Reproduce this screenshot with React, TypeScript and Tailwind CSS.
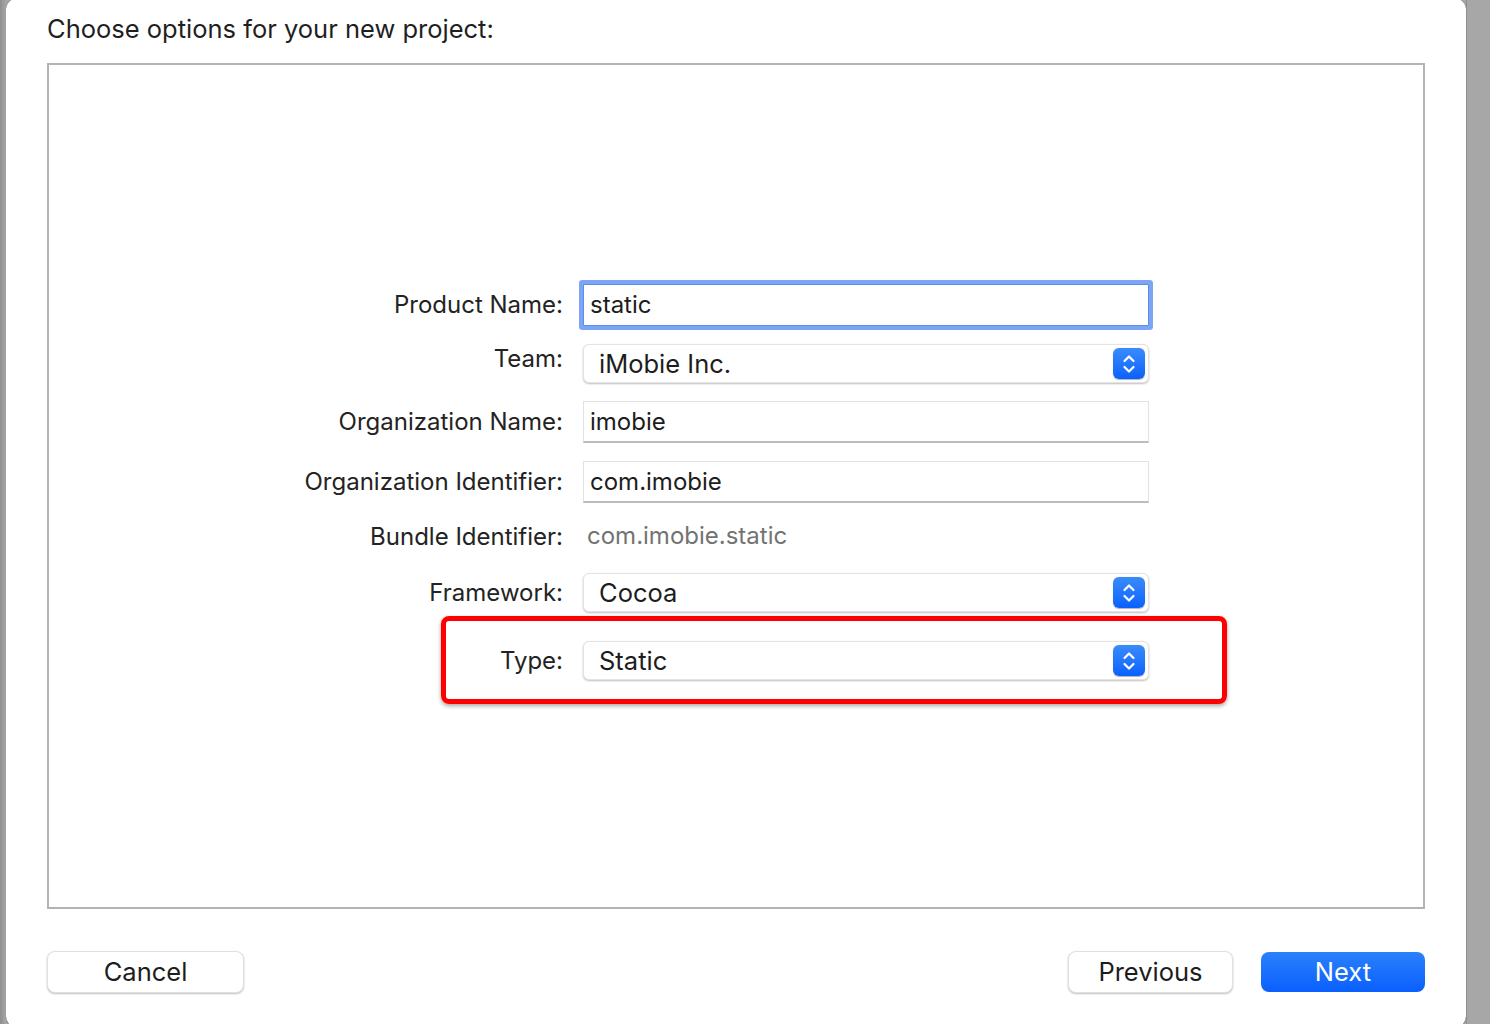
import React from "react";

const font = { fontFamily: "Inter, 'Noto Sans', sans-serif" };

function Stepper() {
  return (
    <div className="w-[32px] h-[31px] rounded-[6px] bg-gradient-to-b from-[#3a8bfa] to-[#0a60fe] flex items-center justify-center shadow-[0_0.5px_1px_rgba(0,0,0,0.3)]">
      <svg width="14" height="22" viewBox="0 0 14 22" fill="none" stroke="white" strokeWidth="2.2" strokeLinecap="round" strokeLinejoin="round">
        <path d="M2.5 8 L7 3.5 L11.5 8" />
        <path d="M2.5 14 L7 18.5 L11.5 14" />
      </svg>
    </div>
  );
}

function Popup({ value }: { value: string }) {
  return (
    <div className="w-[566px] h-[39px] bg-white rounded-[6px] border border-[#e3e3e3] shadow-[0_1px_2px_rgba(0,0,0,0.25)] flex items-center justify-between pl-[15px] pr-[3px]">
      <span className="text-[25.5px] text-[#1d1d1d] leading-none">{value}</span>
      <Stepper />
    </div>
  );
}

function Input({ value, focused }: { value: string; focused?: boolean }) {
  return (
    <div
      className={
        focused
          ? "w-[566px] h-[42px] bg-white border border-[#5b8ee8] ring-4 ring-[#7da5f6] rounded-[1px] flex items-center pl-[6px]"
          : "w-[566px] h-[42px] bg-white border border-[#e2e2e2] border-b-[#bcbcbc] border-b-2 flex items-center pl-[6px]"
      }
    >
      <span className="text-[24px] text-[#1d1d1d] leading-none">{value}</span>
    </div>
  );
}

function Row({ label, children, mt, h, labelClass }: { label: string; children: React.ReactNode; mt: string; h: string; labelClass?: string }) {
  return (
    <div className={`flex items-center ${mt} ${h}`}>
      <div className={`w-[514px] text-right text-[24px] text-[#232323] leading-none ${labelClass ?? ""}`}>{label}</div>
      <div className="ml-[20px]">{children}</div>
    </div>
  );
}

export default function App() {
  return (
    <div className="w-[1490px] h-[1024px] bg-[#a6a6a6] flex overflow-hidden" style={font}>
      <div className="w-[6px] h-full bg-gradient-to-r from-[#8e8e8e] to-[#a9a9a9]" />
      <div className="w-[1460px] h-[1030px] -mt-[2px] bg-white rounded-[12px] flex flex-col pl-[41px] pr-[41px] shadow-[0_0_1px_rgba(0,0,0,0.5)]">
        <div className="h-[62px] pt-[15px] text-[25.5px] text-[#1f1f1f] leading-[32px]">Choose options for your new project:</div>
        <div className="w-[1378px] h-[846px] border-2 border-[#b3b3b3] mt-[3px] pt-[219px] flex flex-col">
          <Row label="Product Name:" mt="mt-0" h="h-[42px]">
            <Input value="static" focused />
          </Row>
          <Row label="Team:" mt="mt-[18px]" h="h-[39px]" labelClass="pb-[10px]">
            <Popup value="iMobie Inc." />
          </Row>
          <Row label="Organization Name:" mt="mt-[18px]" h="h-[42px]">
            <Input value="imobie" />
          </Row>
          <Row label="Organization Identifier:" mt="mt-[18px]" h="h-[42px]">
            <Input value="com.imobie" />
          </Row>
          <Row label="Bundle Identifier:" mt="mt-[15px]" h="h-[38px]">
            <span className="ml-[4px] text-[24px] text-[#737373] leading-none">com.imobie.static</span>
          </Row>
          <Row label="Framework:" mt="mt-[17px]" h="h-[39px]">
            <Popup value="Cocoa" />
          </Row>
          <div className="relative">
            <Row label="Type:" mt="mt-[29px]" h="h-[39px]">
              <Popup value="Static" />
            </Row>
            <div className="absolute left-[392px] top-[4px] w-[786px] h-[88px] border-[5px] border-[#fe0000] rounded-[8px] shadow-[0_2px_4px_rgba(0,0,0,0.35)] pointer-events-none" />
          </div>
        </div>
        <div className="flex items-center mt-[42px]">
          <div className="w-[197px] h-[42px] bg-white rounded-[8px] border border-[#e0e0e0] shadow-[0_1px_2px_rgba(0,0,0,0.25)] flex items-center justify-center text-[25.5px] text-[#1d1d1d]">Cancel</div>
          <div className="flex-1" />
          <div className="w-[165px] h-[42px] bg-white rounded-[8px] border border-[#e0e0e0] shadow-[0_1px_2px_rgba(0,0,0,0.25)] flex items-center justify-center text-[25.5px] text-[#1d1d1d]">Previous</div>
          <div className="ml-[28px] w-[164px] h-[40px] rounded-[8px] bg-gradient-to-b from-[#2a80fa] to-[#0a5ffe] flex items-center justify-center text-[25.5px] text-white">Next</div>
        </div>
      </div>
      <div className="flex-1 h-full bg-[#a7a7a7] border-l border-[#8f8f8f]" />
    </div>
  );
}
